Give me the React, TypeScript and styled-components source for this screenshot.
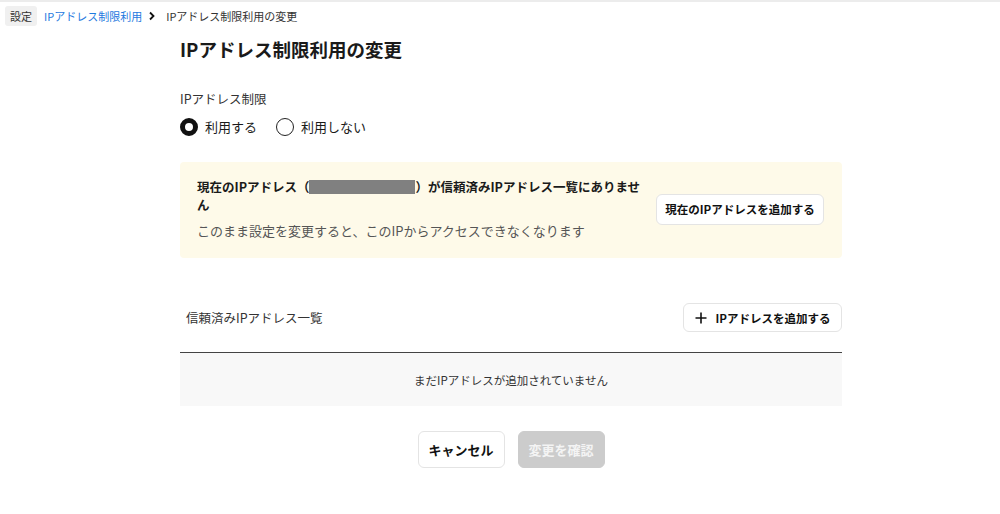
import React, { useState } from "react";
import styled, { createGlobalStyle } from "styled-components";

const GlobalStyle = createGlobalStyle`
  body {
    margin: 0;
    background: #fff;
    font-family: "Noto Sans CJK JP", "Noto Sans", sans-serif;
    color: #1a1a1a;
  }
  * { box-sizing: border-box; }
`;

const Page = styled.div`
  border-top: 2px solid #ececec;
  min-height: 514px;
`;

const Breadcrumb = styled.nav`
  display: flex;
  align-items: center;
  gap: 5px;
  padding: 4px 5px 0;
  font-size: 11px;
  line-height: 20px;
`;

const Crumb = styled.span<{ $kind: "tag" | "link" | "current" }>`
  color: ${(p) => (p.$kind === "link" ? "#1f7ae0" : "#333")};
  background: ${(p) => (p.$kind === "tag" ? "#f0f0f0" : "transparent")};
  border-radius: 3px;
  padding: ${(p) => (p.$kind === "tag" ? "0 5px" : "0")};
  margin-right: ${(p) => (p.$kind === "tag" ? "2px" : "0")};
`;

const Chevron = styled.svg`
  width: 10px;
  height: 10px;
  margin: 0 4px 0 0;
`;

const Main = styled.main`
  width: 662px;
  margin-left: 180px;
  padding-top: 10px;
`;

const Title = styled.h1`
  margin: 0;
  font-size: 18.5px;
  font-weight: 700;
  line-height: 26px;
`;

const FieldLabel = styled.div`
  margin-top: 28px;
  font-size: 12.5px;
  color: #333;
  line-height: 18px;
`;

const RadioRow = styled.div`
  display: flex;
  gap: 19px;
  margin-top: 9px;
`;

const RadioOption = styled.label`
  display: flex;
  align-items: center;
  gap: 7px;
  font-size: 13px;
  cursor: pointer;
`;

const RadioDot = styled.span<{ $checked: boolean }>`
  width: 18px;
  height: 18px;
  border-radius: 50%;
  border: ${(p) => (p.$checked ? "5px solid #111" : "1.5px solid #222")};
  background: #fff;
`;

const Alert = styled.div`
  margin-top: 26px;
  background: #fefae9;
  border-radius: 4px;
  padding: 16px 18px 18px 17px;
  display: flex;
  align-items: center;
  justify-content: space-between;
  gap: 9px;
`;

const AlertText = styled.div`
  flex: 0 0 450px;
`;

const AlertTitle = styled.div`
  font-size: 12.5px;
  font-weight: 700;
  line-height: 18px;
  line-break: anywhere;
`;

const Redacted = styled.span`
  display: inline-block;
  width: 106px;
  height: 14px;
  background: #808080;
  vertical-align: -2px;
`;

const AlertSub = styled.div`
  margin-top: 8px;
  font-size: 13px;
  color: #555;
  line-height: 18px;
  white-space: nowrap;
`;

const Button = styled.button<{ $disabled?: boolean }>`
  font-family: inherit;
  font-size: 11.5px;
  font-weight: 700;
  white-space: nowrap;
  padding: 0;
  border-radius: 6px;
  border: 1px solid ${(p) => (p.$disabled ? "#cccccc" : "#e4e4e4")};
  background: ${(p) => (p.$disabled ? "#cccccc" : "#fff")};
  color: ${(p) => (p.$disabled ? "#f4f4f4" : "#111")};
  display: flex;
  align-items: center;
  justify-content: center;
  gap: 9px;
  cursor: ${(p) => (p.$disabled ? "default" : "pointer")};
`;

const AlertButton = styled(Button)`
  width: 168px;
  height: 31px;
  flex-shrink: 0;
`;

const ListHeader = styled.div`
  margin-top: 45px;
  display: flex;
  align-items: center;
  justify-content: space-between;
  padding-left: 6px;
`;

const ListTitle = styled.div`
  font-size: 12.5px;
  color: #333;
`;

const AddButton = styled(Button)`
  width: 159px;
  height: 29px;
`;

const EmptyList = styled.div`
  margin-top: 20px;
  border-top: 1px solid #444;
  background: #f8f8f8;
  height: 54px;
  display: flex;
  align-items: center;
  justify-content: center;
  font-size: 11.5px;
  color: #333;
`;

const Footer = styled.div`
  display: flex;
  justify-content: center;
  gap: 13px;
  margin-top: 25px;
`;

const FooterButton = styled(Button)`
  width: 87px;
  height: 37px;
  font-size: 13px;
`;

export default function App() {
  const [enabled, setEnabled] = useState(true);

  return (
    <Page>
      <GlobalStyle />
      <Breadcrumb>
        <Crumb $kind="tag">設定</Crumb>
        <Crumb $kind="link">IPアドレス制限利用</Crumb>
        <Chevron viewBox="0 0 10 10">
          <path d="M3 1.5 L6.5 5 L3 8.5" fill="none" stroke="#111" strokeWidth="1.8" />
        </Chevron>
        <Crumb $kind="current">IPアドレス制限利用の変更</Crumb>
      </Breadcrumb>
      <Main>
        <Title>IPアドレス制限利用の変更</Title>
        <FieldLabel>IPアドレス制限</FieldLabel>
        <RadioRow>
          <RadioOption onClick={() => setEnabled(true)}>
            <RadioDot $checked={enabled} />
            利用する
          </RadioOption>
          <RadioOption onClick={() => setEnabled(false)}>
            <RadioDot $checked={!enabled} />
            利用しない
          </RadioOption>
        </RadioRow>
        <Alert>
          <AlertText>
            <AlertTitle>
              現在のIPアドレス（<Redacted />）が信頼済みIPアドレス一覧にありません
            </AlertTitle>
            <AlertSub>このまま設定を変更すると、このIPからアクセスできなくなります</AlertSub>
          </AlertText>
          <AlertButton>現在のIPアドレスを追加する</AlertButton>
        </Alert>
        <ListHeader>
          <ListTitle>信頼済みIPアドレス一覧</ListTitle>
          <AddButton>
            <svg width="12" height="12" viewBox="0 0 12 12">
              <path d="M6 0.5 V11.5 M0.5 6 H11.5" stroke="#111" strokeWidth="1.6" />
            </svg>
            IPアドレスを追加する
          </AddButton>
        </ListHeader>
        <EmptyList>まだIPアドレスが追加されていません</EmptyList>
        <Footer>
          <FooterButton>キャンセル</FooterButton>
          <FooterButton $disabled>変更を確認</FooterButton>
        </Footer>
      </Main>
    </Page>
  );
}
